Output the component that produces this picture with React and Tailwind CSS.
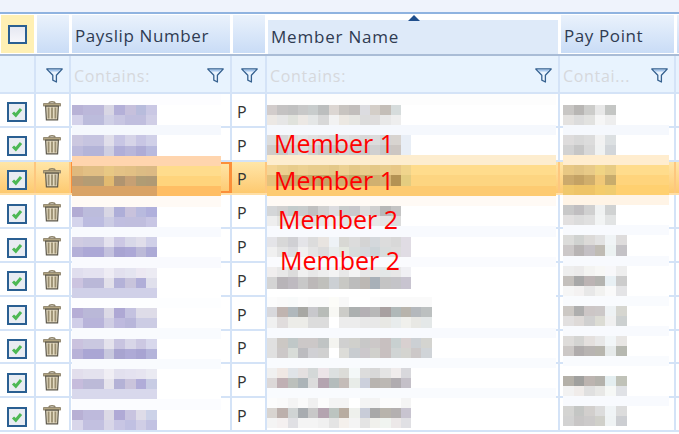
import React from 'react';

// bands run top to bottom from the first data row; `row` is the mosaic, bg fills the rest
const payslipBands = [
  { h: 11, bg: '#fdfdff' },
  { h: 10, bg: '#ffffff', row: '#b8b2d6 #bcb8da #bcb8da #d8d6e4 #b4b0d8 #c6c0dc #b8bcdc #cac8e4' },
  { h: 10, bg: '#ffffff', row: '#d4d2ea #bcbcdc #bcbcdc #d0d0e6 #c8c6e2 #c0bede #c0bede #d0cee6' },
  { h: 10, bg: '#f5f8fd' },
  { h: 11, bg: '#ffffff', row: '#ccc8e0 #c6c4e0 #c6c4e0 #e0deea #c8c6e4 #d6d4e8 #c8c6e4 #d0d0e8' },
  { h: 10, bg: '#ffffff', row: '#bdbbdc #b4b4d8 #b4b4d8 #cfcfe2 #b0aed8 #b8b6da #aeacd6 #b8bade' },
  { h: 10, bg: '#ffd5ae' },
  { h: 10, bg: '#ffdc8c', row: '#dfb97e #e2bf84 #e2bf84 #e8c884 #e4c286 #e2c084 #dcbc84 #dcba84' },
  { h: 10, bg: '#ffd47c', row: '#bd9a70 #b49c74 #b49c74 #e2ba70 #b09470 #c6a074 #b09c74 #b09a74' },
  { h: 10, bg: '#ffbe64', row: '#d9a366 #d9a366 #d9a366 #d9a366 #d9a366 #d9a366 #d9a366 #d9a366' },
  { h: 11, bg: '#fffaf5' },
  { h: 10, bg: '#ffffff', row: '#b2acd4 #bcbcdc #bcbcdc #d8d6e4 #aeaed8 #c8c2dc #b8bade #b0b0dc' },
  { h: 10, bg: '#ffffff', row: '#d4d4ec #bcbce0 #bcbce0 #ccccE4 #c0bee0 #c0bede #c0bede #c8c6e4' },
  { h: 10, bg: '#f8fafe' },
  { h: 10, bg: '#ffffff', row: '#d0cce2 #cccae2 #cccae2 #e4e2ee #ccc8e4 #d8d8e8 #e0deea #d0d0e8' },
  { h: 10, bg: '#ffffff', row: '#b4b0d8 #aca8d6 #aca8d6 #c4c2de #a8a4d2 #aca8d6 #bcbad8 #acaad6' },
  { h: 11, bg: '#f9fafe' },
  { h: 10, bg: '#ffffff', row: '#e0deee #e4e2f0 #e4e2f0 #eeecf4 #e2e0ee #e4e4f0 #ece8f2 #ecebf3' },
  { h: 10, bg: '#ffffff', row: '#ccc4e0 #bab8d8 #bab8d8 #e2e0ea #b4b2d8 #c8c4dc #b0aed8 #e0e0ec' },
  { h: 10, bg: '#ffffff', row: '#d0d0e8 #d0d0e8 #d0d0e8 #d0d0e8 #d0d0e8 #d0d0e8 #d0d0e8 #d0d0e8' },
  { h: 10, bg: '#fdfeff' },
  { h: 10, bg: '#ffffff', row: '#b6aed6 #bab8d8 #bab8d8 #dcdae6 #aea8d4 #c4c2e0 #dedce8 #dedce8' },
  { h: 10, bg: '#ffffff', row: '#d0cee8 #b8b4da #b8b4da #d0cee4 #bebade #b8b6da #ccccE4 #ccccE4' },
  { h: 11, bg: '#f9fbfe' },
  { h: 10, bg: '#ffffff', row: '#cac2de #cac8e0 #cac8e0 #e4e2ec #c8c4e0 #d8d6e8 #ccc8e2 #d8d8ec' },
  { h: 10, bg: '#ffffff', row: '#b8b2d8 #aaa6d4 #aaa6d4 #c8c8de #a8a4d0 #aeaad6 #a8a4d2 #b4b4da' },
  { h: 10, bg: '#f9fbfe' },
  { h: 10, bg: '#ffffff', row: '#e2deec #e4e2ee #e4e2ee #f0eef4 #e2e0ee #e4e2f0 #e6e4f0 #eaeaf2' },
  { h: 10, bg: '#ffffff', row: '#c6bcdc #bcbad8 #bcbad8 #e6e4ec #b4b2d6 #cac4dc #b0acd8 #c8cce4' },
  { h: 10, bg: '#ffffff', row: '#d8d8ec #d8d8ec #d8d8ec #d8d8ec #d8d8ec #d8d8ec #d8d8ec #d8d8ec' },
  { h: 11, bg: '#fbfcff' },
  { h: 10, bg: '#ffffff', row: '#b8b0d4 #bebadc #bebadc #dcdae6 #b0aad6 #c8c4e0 #dedce8 #ccd2e8' },
  { h: 10, bg: '#ffffff', row: '#d8d6ea #c2c0e0 #c2c0e0 #d8d6e8 #c8c6e4 #c0c0e2 #d0cee6 #c2c2e2' },
];

const memberBands = [
  { h: 11, bg: '#fdfdfd' },
  { h: 10, bg: '#ffffff', row: '#d2cccb #c4c2c2 #c0c0c0 #c8c8c8 #c8cccc #bcbebe #dcd6d2 #c8c4c0 #c2bebc #dcdce0 #d4cec8 #c4beb8 #d6dcdc' },
  { h: 10, bg: '#ffffff', row: '#ece8e4 #e6e6e6 #e0e2dc #ece8e4 #e4e6e6 #d8d8d8 #f2f2f2 #ece8e2 #e6e6e2 #dcdcdc #dedcdc #e8e8e8 #eeeeee' },
  { h: 10, bg: '#f5f8fd' },
  { h: 10, bg: '#ffffff', row: '#dcdcdc #d8d8d8 #e0e0e0 #e4e4e4 #e0e0e0 #dcdcdc #d8d8d8 #e0e0e0 #dcdcdc #d8d8d8 #dcdcdc #d4d4d4 #d8d4d0 #e8eef6' },
  { h: 10, bg: '#ffffff', row: '#d0ccc8 #c8c8c8 #d4d4d4 #dcdcdc #d0d0d0 #c8c8c8 #c4c4c4 #d0d0d0 #cccccc #c8c8c8 #d0d0d0 #c8c8c8 #ccc6c2 #e8eef6' },
  { h: 10, bg: '#fdedcf' },
  { h: 10, bg: '#ffdc8c', row: '#f4d596 #ecd090 #e8cc8c #ecd090 #e8cc8c #e8cc8c #e4c888 #ecd090 #e4c888 #e8cc8c #e4c888 #e8cc8c #e8c888 #f0d48c' },
  { h: 11, bg: '#fdd581', row: '#e4c27c #c8a868 #ccac6c #d0b070 #c8a868 #c4a464 #ccb070 #d0b070 #c4a868 #c8ac6c #d0b070 #d4b474 #b49254 #e4cc80' },
  { h: 10, bg: '#fdcb72' },
  { h: 10, bg: '#fffaf5' },
  { h: 10, bg: '#ffffff', row: '#d4d6d8 #d0d0d0 #c4cccc #c8cccc #c0c0c0 #d0d0d0 #dcdce0 #c8cccc #c8c8cc #dcdcdc #d0d0d0 #b8b8b8 #c4c4c4 #ffffff' },
  { h: 10, bg: '#ffffff', row: '#eeeeee #e4e4e4 #e8ecec #e4e4e4 #e0e0e0 #e8e8e8 #f0f0f0 #e0e4e4 #e8e8e8 #f0f0f0 #e8e8e8 #e4e4e4 #dcdcdc #ffffff' },
  { h: 11, bg: '#f8fafe' },
  { h: 10, bg: '#ffffff', row: '#e4e4e8 #d8d8d8 #d0d0d4 #e4e4e8 #dcdcdc #e8e4e0 #eef2f6 #d8d8d4 #dcdcdc #d4d4d4 #d4d8dc #dcdcdc #d8d8d8 #e0dce4' },
  { h: 10, bg: '#ffffff', row: '#f0f0f0 #e4e4e4 #dcdce0 #f0f0f0 #e4e4e4 #dcdcdc #e8ecec #e4e8e0 #d8dcdc #d4d8dc #ccd4d8 #d8dcdc #dcdcdc #e0dce4' },
  { h: 10, bg: '#fafbfe' },
  { h: 10, bg: '#ffffff', row: '#f0eeee #e8e8e8 #dcdcdc #f0f0f0 #e8e8e8 #eeeeee #f4f4f4 #e8e8e8 #f4f4f4 #e8e8e8 #e8e8e8 #e4e8e8 #e8e8e8 #f0f0f4' },
  { h: 12, bg: '#ffffff', row: '#d4d4d4 #b8b4b8 #bebac0 #c8c8c8 #bcb8b8 #c0c0bc #ccd0d4 #c8c8c4 #bcbcbc #bcb8b4 #a8b0b8 #c4c4c4 #c4c4c8 #c8c4d0' },
  { h: 8, bg: '#ffffff' },
  { h: 10, bg: '#ffffff', row: '#fcfcfc #fafafa #f8fafa #fcfcfc #fafafa #fafafa #fcfcf8 #f8f8f8 #ffffff #ffffff #fcfcfc #fafafa #fafafa #fafafa #fafafa #fafafa' },
  { h: 10, bg: '#ffffff', row: '#d8d8dc #c0b4b0 #b0b8bc #a8a8a4 #c8c8cc #b8bcb8 #f8f8f4 #ccccc8 #acb0b0 #b4b0b4 #b8b8b8 #a8a0a0 #b0b8b8 #b8b4ac #b4b8bc #bcc0c0' },
  { h: 11, bg: '#ffffff', row: '#f0f0f0 #e0dcdc #ecece8 #ecece8 #dcdcdc #dcdcdc #ffffff #ececec #ececec #e8e8e8 #e8e8e8 #e8e8e4 #e8ecec #f0f0ec #e8e8e4 #e4e8e8' },
  { h: 10, bg: '#f8fafe' },
  { h: 10, bg: '#ffffff', row: '#e0e0e0 #ccc8c4 #c0c8c8 #ccc8c8 #ccc8c8 #c0c4c4 #f4f4f0 #d0d0d0 #d0d0cc #c8c8c8 #ccc8c8 #c8c0c0 #c8d0d0 #d8d0d0 #ccd0d4 #d4d4d0' },
  { h: 10, bg: '#ffffff', row: '#e0e0e0 #ccc8c8 #d8dcd8 #bcbcc0 #d0d0d4 #d0d0d0 #ffffff #dcdcd8 #c8ccd0 #ccc8cc #d0d0cc #c8c0c0 #d0d4d4 #d4d4d0 #ccc8c8 #d0d4d8' },
  { h: 10, bg: '#f9fbfe' },
  { h: 10, bg: '#ffffff', row: '#f0f0f0 #f0e8e4 #e0e4e8 #e4e0e0 #d4d8d8 #ece4e8 #dce0e0 #dcdcd8 #f4f8f8 #dcdcdc #d8d8d8 #e4e4e4 #f0ecec #d8d8dc' },
  { h: 10, bg: '#ffffff', row: '#dcd8d8 #c0b0b4 #bcc0bc #acb4b8 #dcdcdc #b4a4b0 #b4bcbc #c4bcb8 #e8ece8 #ccd0dc #b8b4b0 #bcb8b4 #b0acb0 #c4c0c8' },
  { h: 10, bg: '#f9fbfe' },
  { h: 10, bg: '#ffffff', row: '#fcfcfc #fafafa #f4f4f4 #fafafa #f0f0f0 #fcfcfc #f4f4f4 #f4f4f4 #ffffff #f4f4f4 #f4f4f4 #fcfcfc #fcfcfc #f4f4f4' },
  { h: 10, bg: '#ffffff', row: '#d8d4d0 #bcb0ac #d0d4d4 #a8acb0 #c8c8c8 #b4a4b0 #bcc4c0 #b8aca0 #eef0ec #c8ccd8 #a8a8a8 #b8b4ac #b4b0b0 #c8c4d0' },
  { h: 10, bg: '#ffffff', row: '#f4f4f4 #f4f0f0 #e0e0e4 #f4f4f4 #f4f4f4 #f0f0f0 #e4e4e4 #f4f0ec #f4f4f4 #e4e4e4 #f0f0ec #f0f4f0 #ecE8e8 #e0e0e4' },
];

const payPointBands = [
  { h: 11, bg: '#ffffff' },
  { h: 10, bg: '#ffffff', row: '#c8c6c4 #b8b6b4 #ccccca #e8e8e8 #c4c6c4' },
  { h: 10, bg: '#ffffff', row: '#e4e2e0 #dcdcdc #e2e2e0 #f6f6f6 #eeeeee' },
  { h: 10, bg: '#f5f8fd' },
  { h: 10, bg: '#ffffff', row: '#dedcdc #d8d8d8 #dcdcdc #f2f2f2 #dce0e2' },
  { h: 10, bg: '#ffffff', row: '#d2d2d2 #c6c6c6 #d8d8d8 #f0f2f2 #d2d6da' },
  { h: 10, bg: '#ffedcf' },
  { h: 10, bg: '#ffdc8c', row: '#e8c884 #e2c484 #e8ca88 #f0d484 #e8cc84' },
  { h: 10, bg: '#ffd47c', row: '#ccaa6c #c4a264 #d0ae6c #f0c878 #c8ac6c' },
  { h: 10, bg: '#ffd070', row: '#f0c86c #eec468 #eec468 #f4cc6c #f0cc70' },
  { h: 10, bg: '#fff4e6' },
  { h: 10, bg: '#ffffff', row: '#c8c8c8 #c0bec0 #d0d0d0 #f0f2f2 #d0d2d2' },
  { h: 10, bg: '#ffffff', row: '#e2e0e0 #dcdcdc #e0e0e0 #f2f4f4 #e2e4e4' },
  { h: 10, bg: '#f8fafe' },
  { h: 10, bg: '#ffffff', row: '#dcdcda #d0d2d0 #dcdad8 #e2e2e2 #f0f4f6 #dedcdc' },
  { h: 11, bg: '#ffffff', row: '#ccc8c8 #b8b4b4 #c4c0c4 #c0bcb4 #ecf2f2 #c4c2c6' },
  { h: 10, bg: '#f8fafe' },
  { h: 10, bg: '#ffffff', row: '#eeeeee #ecebeb #f4f4f2 #f8f8f6 #f8f8fa #eeeeee' },
  { h: 10, bg: '#ffffff', row: '#c4c0bc #a8a8a8 #bcb4b4 #b4b4b0 #e8f0f4 #cccccc' },
  { h: 10, bg: '#ffffff', row: '#f6f6f6 #f4f2f2 #e8e8e8 #f2f2f0 #fafafa #e4e4e6' },
  { h: 10, bg: '#f9fbfe' },
  { h: 10, bg: '#ffffff', row: '#ccc8c4 #aeaeae #ccc6c6 #ccc8c8 #eef2f4 #d6d6d0' },
  { h: 10, bg: '#ffffff', row: '#e2e0e0 #dedad8 #d0d0d0 #dcdcd4 #f0f0f0 #ccd0d0' },
  { h: 10, bg: '#f8fafe' },
  { h: 10, bg: '#ffffff', row: '#dedcda #d4d4d2 #e4e0de #e8e8e8 #f2f6f8 #e8e6e4' },
  { h: 10, bg: '#ffffff', row: '#ccc8c6 #b0acac #b8b4b2 #b8b6ae #e6eaea #b6b8b0' },
  { h: 10, bg: '#f9fbfe' },
  { h: 10, bg: '#ffffff' },
  { h: 10, bg: '#ffffff', row: '#b4b0a8 #a0a09e #bcb4b0 #b4b2ac #e4eef0 #c0c2b8' },
  { h: 10, bg: '#ffffff', row: '#f2f2f2 #f0ecea #e0e0e0 #e8e8e6 #f6f8f6 #e0e2e6' },
  { h: 10, bg: '#f8fafe' },
  { h: 10, bg: '#ffffff', row: '#d4d4d2 #c4c6c4 #d2cfcd #dcdcdc #f0f4f6 #dcdcdc' },
  { h: 10, bg: '#ffffff', row: '#d2d2d2 #c8c6c6 #cccaca #d0d0ca #eff3f4 #ccced2' },
];

const Check = () => (
  <svg width="20" height="20" viewBox="0 0 20 20">
    <rect x="1" y="1" width="18" height="18" fill="#e8ecf2" stroke="#2a5f92" strokeWidth="2" />
    <path d="M6 10.5 L8.8 13.2 L14 7" fill="none" stroke="#4cb854" strokeWidth="3" />
  </svg>
);

const Trash = () => (
  <svg width="18" height="20" viewBox="0 0 18 20">
    <path d="M6 2.5 Q6 .8 9 .8 Q12 .8 12 2.5" fill="none" stroke="#8d8268" strokeWidth="1.4" />
    <rect x=".6" y="2.6" width="16.8" height="2.4" fill="#b3a582" stroke="#857a62" strokeWidth=".8" />
    <path d="M2.6 5.2 H15.4 L14.6 18.8 H3.4 Z" fill="#e2d9c0" stroke="#5f5a4c" strokeWidth="1.2" />
    <path d="M5.6 6.5 V17.5 M9 6.5 V17.5 M12.4 6.5 V17.5" stroke="#9a8e70" strokeWidth="1.8" />
  </svg>
);

const Funnel = () => (
  <svg width="17" height="15" viewBox="0 0 17 15">
    <path d="M.8 1 H16.2 L10.4 7.2 V14 L6.8 12.2 V7.2 Z" fill="#eaf4fe" stroke="#36618f" strokeWidth="1.3" strokeLinejoin="round" />
    <path d="M2 1.4 H15 L12.6 3.6 H4.2 Z" fill="#a9c8ec" />
  </svg>
);

const HeaderCell = ({ children, className = '' }) => (
  <div className={`flex items-center border border-white border-r-[2px] bg-gradient-to-b from-[#eaf2fc] to-[#c9dcf6] pl-[3px] pt-[3px] text-[17px] tracking-[0.6px] text-[#2f3b52] ${className}`}>
    {children}
  </div>
);

const FilterInput = ({ label }) => (
  <div className="flex h-full items-center justify-between overflow-hidden border-r-2 border-[#d4e3f7] pl-[3px] pr-[6px] pt-[3px]">
    <span className="text-[16px] tracking-[0.7px] text-[#d6d8dc]">{label}</span>
    <Funnel />
  </div>
);

const Mosaic = ({ bands, width, cell }) => (
  <div style={{ width }} className="flex flex-col">
    {bands.map((band, i) => (
      <div key={i} style={{ height: band.h, background: band.bg }} className="flex">
        {band.row && band.row.split(' ').map((color, j) => (
          <div key={j} style={{ width: cell, background: color }} />
        ))}
      </div>
    ))}
  </div>
);

const rows = [0, 1, 2, 3, 4, 5, 6, 7, 8, 9];
const gridCols = 'grid grid-cols-[36px_35px_161px_35px_293px_116px_3px]';

const App = () => {
  return (
    <div className="relative h-[434px] w-[679px] overflow-hidden bg-white font-['Open_Sans','Noto_Sans',sans-serif]">
      <div className="h-[12px] bg-[#eff3fc]" />

      {/* column headers */}
      <div className={`${gridCols} h-[44px] border-y-2 border-t-[#8fb3e0] border-b-[#a9bcd6] bg-white`}>
        <div className="flex items-center justify-center border border-white border-r-[2px] bg-[#fff0b4]">
          <div className="h-[19px] w-[19px] border-2 border-[#2a5f92] bg-gradient-to-b from-[#e6e8f2] to-[#f6f6fa]" />
        </div>
        <HeaderCell />
        <HeaderCell>Payslip Number</HeaderCell>
        <HeaderCell />
        <div className="relative flex items-end border-r-2 border-white pl-[1px]">
          <div className="flex h-[34px] w-full items-center bg-[#deeaf9] pb-[1px] pl-[3px] text-[17px] tracking-[0.8px] text-[#2f3b52]">Member Name</div>
          <div className="absolute left-[141px] top-[1px] h-0 w-0 border-x-[6px] border-b-[6px] border-x-transparent border-b-[#1f4e8c]" />
        </div>
        <HeaderCell>Pay Point</HeaderCell>
        <HeaderCell />
      </div>

      {/* filter row */}
      <div className={`${gridCols} h-[38px] border-b-2 border-[#d4e3f7] bg-[#e8f3fe]`}>
        <div className="border-r-2 border-[#d4e3f7]" />
        <div className="flex items-center justify-end border-r-2 border-[#d4e3f7] pr-[6px] pt-[3px]"><Funnel /></div>
        <FilterInput label="Contains:" />
        <div className="flex items-center justify-end border-r-2 border-[#d4e3f7] pr-[7px] pt-[3px]"><Funnel /></div>
        <FilterInput label="Contains:" />
        <FilterInput label="Contai..." />
        <div />
      </div>

      {/* data rows */}
      {rows.map(i => {
        const active = i === 2;
        const line = active ? 'border-[#fdc77f]' : 'border-[#d4e3f7]';
        return (
          <div
            key={i}
            className={`${gridCols} h-[33.8px] border-b-2 ${active ? 'border-[#ffdfa6] bg-gradient-to-b from-[#ffe6a8] to-[#fdc96f]' : 'border-[#d4e3f7]'}`}
          >
            <div className={`flex items-center justify-center border-r-2 pt-[5px] ${line}`}><Check /></div>
            <div className={`flex items-center justify-center border-r-2 pr-[2px] pt-[2px] ${line}`}><Trash /></div>
            <div className={active ? 'border-2 border-r-[3px] border-[#fb8f3a]' : 'border-r-2 border-[#d4e3f7]'} />
            <div className={`flex items-center border-r-2 pl-[5px] pt-[4px] text-[16px] text-[#333] ${line}`}>P</div>
            <div className={`border-r-2 ${line}`} />
            <div className={`border-r-2 ${line}`} />
            <div />
          </div>
        );
      })}

      {/* blurred-out values sit on top of the grid */}
      <div className="absolute left-[72px] top-[94px]"><Mosaic bands={payslipBands} width={149} cell={10.6} /></div>
      <div className="absolute left-[267px] top-[94px]"><Mosaic bands={memberBands} width={289} cell={10.3} /></div>
      <div className="absolute left-[563px] top-[94px]"><Mosaic bands={payPointBands} width={106} cell={10.6} /></div>

      {/* hand annotations */}
      <div className="absolute left-[274px] top-[125px] text-[25px] leading-[36px] text-[#ff0000]">Member 1</div>
      <div className="absolute left-[274px] top-[162px] text-[25px] leading-[36px] text-[#ff0000]">Member 1</div>
      <div className="absolute left-[278px] top-[201px] text-[25px] leading-[36px] text-[#ff0000]">Member 2</div>
      <div className="absolute left-[280px] top-[242px] text-[25px] leading-[36px] text-[#ff0000]">Member 2</div>
    </div>
  );
};

export default App;
